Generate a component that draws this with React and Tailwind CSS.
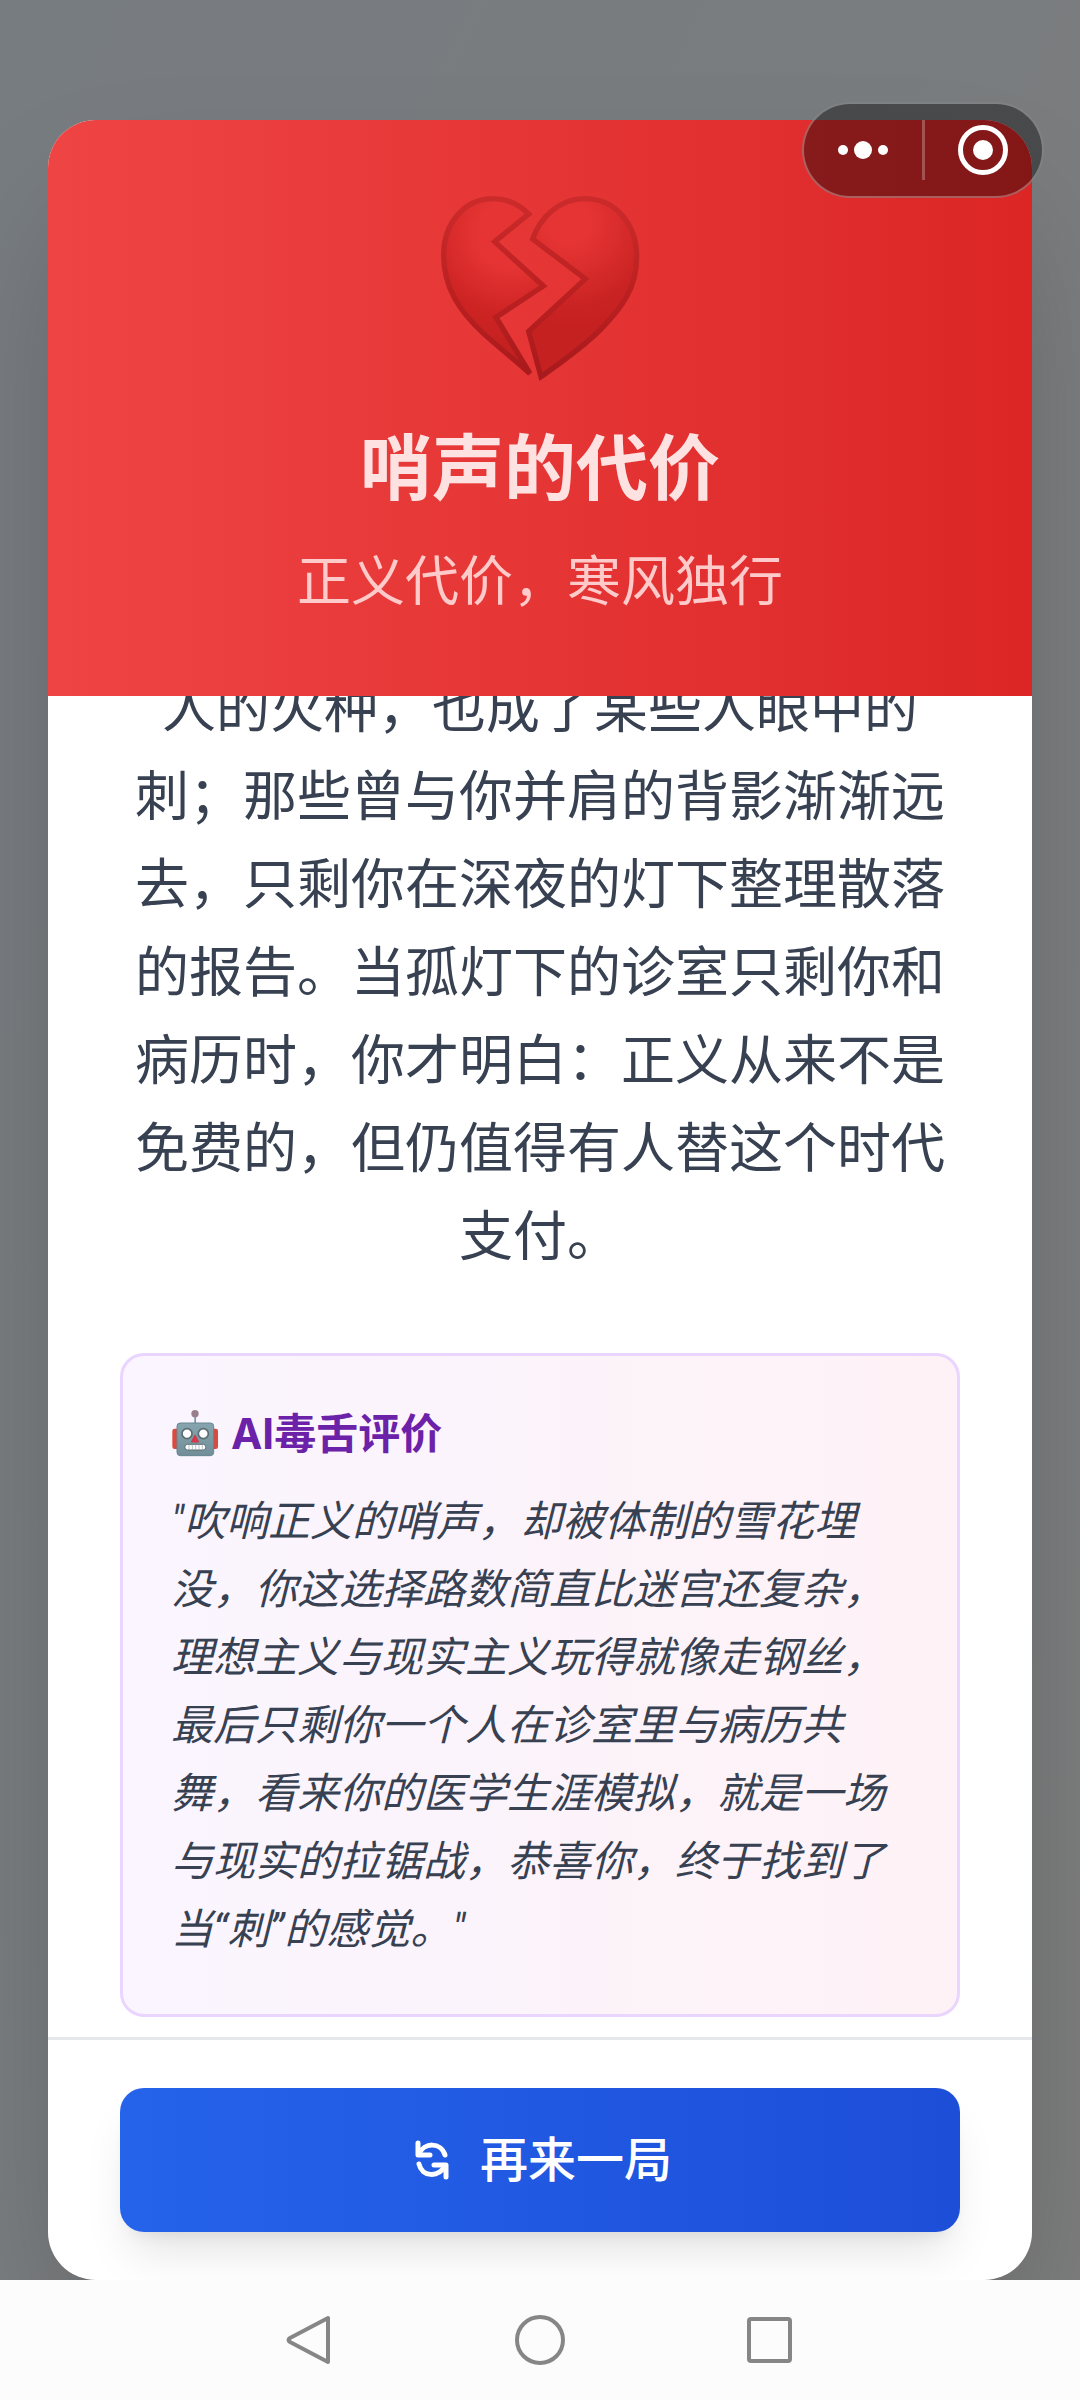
import React from 'react';

const BrokenHeart = () => (
    <svg viewBox="120 66 600 600" className="h-[200px] w-[200px]" aria-hidden="true">
        <defs>
            <radialGradient id="heartLeft" gradientUnits="userSpaceOnUse" cx="330" cy="190" r="330">
                <stop offset="0.3" stopColor="#e63434" />
                <stop offset="0.75" stopColor="#cd2323" />
                <stop offset="1" stopColor="#c62121" />
            </radialGradient>
            <radialGradient id="heartRight" gradientUnits="userSpaceOnUse" cx="510" cy="160" r="310">
                <stop offset="0.2" stopColor="#e63434" />
                <stop offset="0.8" stopColor="#ca2323" />
                <stop offset="1" stopColor="#c62121" />
            </radialGradient>
            <linearGradient id="heartEdge" gradientUnits="userSpaceOnUse" x1="0" y1="80" x2="0" y2="620">
                <stop offset="0" stopColor="#cc2b2b" />
                <stop offset="0.6" stopColor="#b91f20" />
                <stop offset="1" stopColor="#a81a1c" />
            </linearGradient>
        </defs>
        <g stroke="url(#heartEdge)" strokeWidth="16" strokeLinejoin="miter">
            <path
                fill="url(#heartLeft)"
                d="M386 132 C358 104 322 86 280 86 C192 86 131 160 131 255 C131 355 180 425 250 490 C300 535 348 572 390 611 L288 442 L430 348 L284 215 Z"
            />
            <path
                fill="url(#heartRight)"
                d="M398 207 C420 142 478 86 555 86 C648 86 710 165 710 260 C710 350 670 410 600 480 C545 535 478 580 423 620 L386 484 L556 327 Z"
            />
        </g>
    </svg>
);

const Robot = () => (
    <svg viewBox="24 30 144 144" className="h-12 w-12" aria-hidden="true">
        <defs>
            <linearGradient id="robotFace" x1="0" y1="0" x2="0" y2="1">
                <stop offset="0" stopColor="#86a5ae" />
                <stop offset="1" stopColor="#728f99" />
            </linearGradient>
        </defs>
        <rect x="94" y="44" width="5" height="26" fill="#6f98a6" />
        <circle cx="96" cy="41" r="11" fill="#97808c" />
        <rect x="28" y="86" width="20" height="61" rx="7" fill="#dc4a3c" />
        <rect x="145" y="86" width="20" height="61" rx="7" fill="#dc4a3c" />
        <rect x="42" y="69" width="110" height="98" rx="10" fill="url(#robotFace)" stroke="#648590" strokeWidth="3" />
        <circle cx="72" cy="101" r="15" fill="#fff" stroke="#5a6e72" strokeWidth="5" />
        <circle cx="121" cy="101" r="15" fill="#fff" stroke="#5a6e72" strokeWidth="5" />
        <path d="M96 105 L107 126 H85 Z" fill="#e0354a" stroke="#c63a4c" strokeWidth="3" strokeLinejoin="round" />
        <rect x="66" y="133" width="62" height="17" rx="7" fill="#fff" stroke="#5a6e72" strokeWidth="3" />
        <path d="M78 133 V150 M88 133 V150 M98 133 V150 M108 133 V150 M118 133 V150" stroke="#93a5aa" strokeWidth="2" />
    </svg>
);

const Refresh = () => (
    <svg
        viewBox="0 0 44 44"
        className="h-11 w-11"
        fill="none"
        stroke="currentColor"
        strokeWidth="5"
        strokeLinecap="round"
        strokeLinejoin="round"
        aria-hidden="true"
    >
        <path d="M10 5 V17 H22" />
        <path d="M11 16 C16 4 33 4 37 17" />
        <path d="M38 39 V27 H26" />
        <path d="M11 26 C14 39 30 40 37 28" />
    </svg>
);

const MiniProgramCapsule = () => (
    <div className="absolute right-9 top-[102px] flex h-24 w-[242px] items-center rounded-full border-2 border-white/30 bg-black/40 text-white">
        <button aria-label="更多" className="flex h-full flex-1 items-center justify-center">
            <svg viewBox="0 0 52 20" className="h-5 w-[52px]" fill="currentColor">
                <circle cx="6" cy="10" r="5" />
                <circle cx="26" cy="10" r="9" />
                <circle cx="46" cy="10" r="5" />
            </svg>
        </button>
        <span className="h-[60px] w-[3px] bg-white/25" />
        <button aria-label="关闭" className="flex h-full flex-1 items-center justify-center">
            <svg viewBox="0 0 50 50" className="h-[50px] w-[50px]">
                <circle cx="25" cy="25" r="22.5" fill="none" stroke="currentColor" strokeWidth="5" />
                <circle cx="25" cy="25" r="10" fill="currentColor" />
            </svg>
        </button>
    </div>
);

const SystemNav = () => (
    <nav className="flex h-[120px] shrink-0 items-center justify-center gap-[180px] bg-[#fcfcfc] text-[#868686]">
        <button aria-label="返回">
            <svg viewBox="0 0 50 50" className="h-[50px] w-[50px]" fill="none" stroke="currentColor" strokeWidth="4" strokeLinejoin="round">
                <path d="M43 3 V47 L5 27 Q2 25 5 23 Z" />
            </svg>
        </button>
        <button aria-label="主页">
            <svg viewBox="0 0 50 50" className="h-[50px] w-[50px]" fill="none" stroke="currentColor" strokeWidth="4">
                <circle cx="25" cy="25" r="23" />
            </svg>
        </button>
        <button aria-label="最近任务">
            <svg viewBox="0 0 50 50" className="h-[50px] w-[50px]" fill="none" stroke="currentColor" strokeWidth="4">
                <rect x="4" y="4" width="41" height="42" rx="2" />
            </svg>
        </button>
    </nav>
);

export default function App() {
    return (
        <div className="relative flex h-screen flex-col bg-linear-to-br from-[#777c80] to-[#7d7d7d] font-['Inter','Noto_Sans_CJK_SC',sans-serif]" lang="zh-CN">
            <div className="flex min-h-0 flex-1 flex-col overflow-hidden px-12 pt-[120px]">
                <main className="flex min-h-0 flex-1 flex-col overflow-hidden rounded-[48px] bg-white shadow-[0_75px_150px_-36px_rgba(0,0,0,0.25)]">
                    <header className="flex shrink-0 flex-col items-center bg-linear-to-r/srgb from-[#ef4444] to-[#dc2626] p-[72px] text-center">
                        <BrokenHeart />
                        <h1 className="mt-9 text-[72px] leading-[80px] font-bold text-[#fee2e2]">哨声的代价</h1>
                        <p className="mt-8 text-[54px] leading-[84px] text-[#fecaca]">正义代价，寒风独行</p>
                    </header>

                    {/* Ending text, scrolled to the bottom */}
                    <section className="flex min-h-0 flex-1 flex-col justify-end overflow-hidden px-[72px] pb-5 text-[#374151]">
                        <p className="text-center text-[54px] leading-[88px]">
                            人的火种，也成了某些人眼中的刺；那些曾与你并肩的背影渐渐远去，只剩你在深夜的灯下整理散落的报告。当孤灯下的诊室只剩你和病历时，你才明白：正义从来不是免费的，但仍值得有人替这个时代支付。
                        </p>

                        <div className="mt-[72px] rounded-3xl border-3 border-[#e9d5ff] bg-linear-to-r/srgb from-[#faf5ff] to-[#fef2f6] px-12 pt-12 pb-[50px]">
                            <h2 className="flex items-center gap-3 text-[42px] leading-[60px] font-bold text-[#6b21a8]">
                                <Robot />
                                AI毒舌评价
                            </h2>
                            <p className="mt-6 font-['Roboto','Noto_Sans_CJK_SC',sans-serif] text-[42px] leading-[68px] italic">
                                "吹响正义的哨声，却被体制的雪花埋没，你这选择路数简直比迷宫还复杂，理想主义与现实主义玩得就像走钢丝，最后只剩你一个人在诊室里与病历共舞，看来你的医学生涯模拟，就是一场与现实的拉锯战，恭喜你，终于找到了当“刺”的感觉。"
                            </p>
                        </div>
                    </section>

                    <footer className="shrink-0 border-t-3 border-[#e5e7eb] px-[72px] py-12">
                        <button className="flex h-36 w-full items-center justify-center gap-7 rounded-3xl bg-linear-to-r/srgb from-[#2563eb] to-[#1d4ed8] text-[48px] font-medium text-white shadow-[0_30px_45px_-9px_rgba(0,0,0,0.1),0_12px_18px_-12px_rgba(0,0,0,0.1)]">
                            <Refresh />
                            再来一局
                        </button>
                    </footer>
                </main>
            </div>

            <SystemNav />
            <MiniProgramCapsule />
        </div>
    );
}
